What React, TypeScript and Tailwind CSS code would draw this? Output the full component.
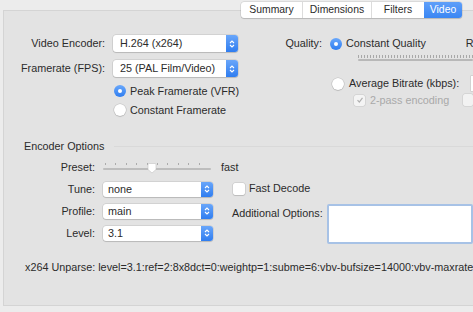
import React from "react";

const Stepper = ({ h }: { h: number }) => (
  <div
    className={`flex w-[12px] items-center justify-center rounded-r-[3px] bg-[linear-gradient(#69a6fa,#2f7df0)] ${h === 17 ? "h-[17px]" : "h-[15px]"}`}
  >
    <svg width="6" height="10" viewBox="0 0 6 10" fill="none" stroke="#fff" strokeWidth="1.1">
      <path d="M1 4 L3 2 L5 4" />
      <path d="M1 6 L3 8 L5 6" />
    </svg>
  </div>
);

const Popup = ({ text, w, h, pl }: { text: string; w: string; h: number; pl: string }) => (
  <div
    className={`flex items-center justify-between rounded-[3px] bg-white shadow-[0_0_0_0.5px_rgba(0,0,0,0.15),0_1px_1px_rgba(0,0,0,0.12)] ${w} ${h === 17 ? "h-[17px]" : "h-[15px]"}`}
  >
    <span className={`${pl} text-[#2b2b2b]`}>{text}</span>
    <Stepper h={h} />
  </div>
);

const RadioOn = () => (
  <div className="flex h-[12px] w-[12px] shrink-0 items-center justify-center rounded-full bg-[linear-gradient(#6aa8fb,#2f7df0)]">
    <div className="h-[4px] w-[4px] rounded-full bg-white" />
  </div>
);
const RadioOff = () => (
  <div className="h-[12px] w-[12px] shrink-0 rounded-full bg-white shadow-[0_0_0_0.5px_rgba(0,0,0,0.18),0_1px_1px_rgba(0,0,0,0.1)]" />
);

export default function App() {
  return (
    <div className="relative h-[312px] w-[473px] overflow-hidden whitespace-nowrap bg-[#ececec] font-['Liberation_Sans',Arial,sans-serif] text-[10.8px] leading-none text-[#2b2b2b]">
      {/* Tabs */}
      <div className="absolute left-[241px] top-[2px] z-10 flex h-[16px] overflow-hidden rounded-[3px] bg-white text-[10.4px] shadow-[0_0_0_0.5px_rgba(0,0,0,0.15),0_1px_1px_rgba(0,0,0,0.12)]">
        <div className="flex w-[62px] items-center justify-center border-r border-[#dcdcdc]">Summary</div>
        <div className="flex w-[69px] items-center justify-center border-r border-[#dcdcdc]">Dimensions</div>
        <div className="flex w-[52px] items-center justify-center">Filters</div>
        <div className="flex w-[38px] items-center justify-center bg-[linear-gradient(#5f9ff9,#3a86f3)] text-white">Video</div>
      </div>

      {/* Panel */}
      <div className="ml-[3px] mt-[10px] h-[296px] border border-r-0 border-[#d4d4d4] bg-[#e3e3e3]">
        {/* Top section */}
        <div className="flex pt-[24px]">
          {/* Left column */}
          <div className="flex w-[246px] shrink-0 flex-col">
            <div className="flex items-center">
              <div className="w-[101px] text-right">Video Encoder:</div>
              <div className="ml-[8px]">
                <Popup text="H.264 (x264)" w="w-[125px]" h={17} pl="pl-[7px]" />
              </div>
            </div>
            <div className="mt-[8px] flex items-center">
              <div className="w-[101px] text-right">Framerate (FPS):</div>
              <div className="ml-[8px]">
                <Popup text="25 (PAL Film/Video)" w="w-[125px]" h={17} pl="pl-[7px]" />
              </div>
            </div>
            <div className="ml-[110px] mt-[8px] flex items-center gap-[4px]">
              <RadioOn />
              <span>Peak Framerate (VFR)</span>
            </div>
            <div className="ml-[110px] mt-[7px] flex items-center gap-[4px]">
              <RadioOff />
              <span>Constant Framerate</span>
            </div>
          </div>

          {/* Right column */}
          <div className="flex min-w-0 flex-1 flex-col">
            <div className="flex h-[17px] items-center">
              <div className="w-[72px] shrink-0 text-right">Quality:</div>
              <div className="ml-[8px] flex shrink-0 items-center gap-[4px]">
                <RadioOn />
                <span>Constant Quality</span>
              </div>
              <span className="ml-[40px] shrink-0">RF:</span>
            </div>
            <div className="ml-[108px] mt-[3px] flex flex-col">
              <div className="h-[3px] bg-[repeating-linear-gradient(90deg,#a8a8a8_0px,#a8a8a8_1px,transparent_1px,transparent_3px)]" />
              <div className="mt-[1px] h-[2px] rounded-full bg-[#b8b8b8]" />
            </div>
            <div className="mt-[15px] flex h-[15px] items-center">
              <div className="ml-[82px] flex shrink-0 items-center gap-[5px]">
                <RadioOff />
                <span>Average Bitrate (kbps):</span>
              </div>
              <div className="ml-[12px] h-[15px] w-[20px] shrink-0 bg-white shadow-[0_0_0_0.5px_rgba(0,0,0,0.15)]" />
            </div>
            <div className="mt-[3px] flex h-[12px] items-center">
              <div className="ml-[104px] flex shrink-0 items-center gap-[5px] text-[#a9a9a9]">
                <div className="flex h-[11px] w-[11px] items-center justify-center rounded-[2px] bg-[#f4f4f4] shadow-[0_0_0_0.5px_rgba(0,0,0,0.12)]">
                  <svg width="8" height="8" viewBox="0 0 8 8" fill="none" stroke="#b0b0b0" strokeWidth="1.2">
                    <path d="M1.5 4.2 L3.3 6 L6.5 1.8" />
                  </svg>
                </div>
                <span>2-pass encoding</span>
              </div>
              <div className="ml-[14px] h-[12px] w-[10px] shrink-0 rounded-[2px] bg-[#f2f2f2] shadow-[0_0_0_0.5px_rgba(0,0,0,0.12)]" />
            </div>
          </div>
        </div>

        {/* Encoder Options header */}
        <div className="mt-[25px] flex items-center">
          <span className="ml-[20px] text-[#2b2b2b]">Encoder Options</span>
          <div className="ml-[10px] h-px flex-1 bg-[#d9d9d9]" />
        </div>

        {/* Preset row */}
        <div className="mt-[10px] flex h-[12px] items-center">
          <div className="w-[91px] text-right">Preset:</div>
          <div className="relative ml-[8px] h-[12px] w-[108px]">
            <div className="absolute left-[2px] right-[2px] top-[1px] h-[2px] bg-[repeating-linear-gradient(90deg,#ababab_0px,#ababab_1px,transparent_1px,transparent_10.4px)]" />
            <div className="absolute left-0 right-0 top-[6px] h-[2px] rounded-full bg-[#bdbdbd]" />
            <svg className="absolute left-[44px] top-[1px]" width="10" height="11" viewBox="0 0 10 11">
              <path d="M1 1.5 Q1 0.5 2 0.5 H8 Q9 0.5 9 1.5 V6.5 L5 10 L1 6.5 Z" fill="#ffffff" stroke="#c4c4c4" strokeWidth="0.6" />
            </svg>
          </div>
          <span className="ml-[10px]">fast</span>
        </div>

        {/* Tune / Profile / Level + right side */}
        <div className="mt-[8px] flex">
          <div className="flex w-[209px] shrink-0 flex-col gap-[7px]">
            <div className="flex items-center">
              <div className="w-[91px] text-right">Tune:</div>
              <div className="ml-[8px]">
                <Popup text="none" w="w-[110px]" h={15} pl="pl-[5px]" />
              </div>
            </div>
            <div className="flex items-center">
              <div className="w-[91px] text-right">Profile:</div>
              <div className="ml-[8px]">
                <Popup text="main" w="w-[110px]" h={15} pl="pl-[5px]" />
              </div>
            </div>
            <div className="flex items-center">
              <div className="w-[91px] text-right">Level:</div>
              <div className="ml-[8px]">
                <Popup text="3.1" w="w-[110px]" h={15} pl="pl-[5px]" />
              </div>
            </div>
          </div>
          <div className="ml-[19px] flex min-w-0 flex-1 flex-col">
            <div className="mt-[1px] flex h-[12px] items-center gap-[4px]">
              <div className="ml-[1px] h-[12px] w-[12px] rounded-[2px] bg-white shadow-[0_0_0_0.5px_rgba(0,0,0,0.15),0_1px_1px_rgba(0,0,0,0.1)]" />
              <span>Fast Decode</span>
            </div>
            <div className="mt-[9px] flex items-start">
              <span className="mt-[4px] shrink-0">Additional Options:</span>
              <div className="ml-[4px] h-[40px] flex-1 rounded-[2px] border-[2px] border-[#a7c2e6] bg-white" />
            </div>
          </div>
        </div>

        {/* Unparse */}
        <div className="ml-[21px] mt-[18px]">
          x264 Unparse: level=3.1:ref=2:8x8dct=0:weightp=1:subme=6:vbv-bufsize=14000:vbv-maxrate=14000
        </div>
      </div>
    </div>
  );
}
